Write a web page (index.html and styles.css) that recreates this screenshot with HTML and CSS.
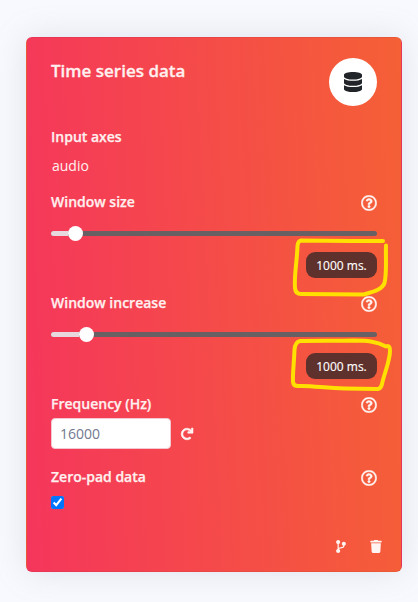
FILE: index.html
```html
<!DOCTYPE html>
<html lang="en">
<head>
<meta charset="utf-8">
<title>Time series data</title>
<link rel="stylesheet" href="styles.css">
</head>
<body>
<svg class="defs" width="0" height="0" aria-hidden="true">
  <symbol id="help" viewBox="0 0 512 512"><path d="M256 8C119.043 8 8 119.083 8 256c0 136.997 111.043 248 248 248s248-111.003 248-248C504 119.083 392.957 8 256 8zm0 448c-110.532 0-200-89.431-200-200 0-110.495 89.472-200 200-200 110.491 0 200 89.471 200 200 0 110.53-89.431 200-200 200zm107.244-255.2c0 67.052-72.421 68.084-72.421 92.863V300c0 6.627-5.373 12-12 12h-45.647c-6.627 0-12-5.373-12-12v-8.659c0-35.745 27.1-50.034 47.579-61.516 17.561-9.845 28.324-16.541 28.324-29.579 0-17.246-21.999-28.693-39.784-28.693-23.189 0-33.894 10.977-48.942 29.969-4.057 5.12-11.46 6.071-16.666 2.124l-27.824-21.098c-5.107-3.872-6.251-11.066-2.644-16.363C184.846 131.491 214.94 112 261.794 112c49.071 0 101.45 38.304 101.45 88.8zM298 368c0 23.159-18.841 42-42 42s-42-18.841-42-42 18.841-42 42-42 42 18.841 42 42z"/></symbol>
</svg>
<main class="card">
  <header class="card-header">
    <h1 class="title">Time series data</h1>
    <span class="badge-icon"><svg width="18" height="20" viewBox="0 0 448 512" preserveAspectRatio="none"><path d="M448 73.143v45.714C448 159.143 347.667 192 224 192S0 159.143 0 118.857V73.143C0 32.857 100.333 0 224 0s224 32.857 224 73.143zM448 176v102.857C448 319.143 347.667 352 224 352S0 319.143 0 278.857V176c48.125 33.143 136.208 48.572 224 48.572S399.874 209.143 448 176zm0 160v102.857C448 479.143 347.667 512 224 512S0 479.143 0 438.857V336c48.125 33.143 136.208 48.572 224 48.572S399.874 369.143 448 336z"/></svg></span>
  </header>

  <section class="field field-axes">
    <div class="label-row"><span class="label">Input axes</span></div>
    <div class="axes">audio</div>
  </section>

  <section class="field field-slider">
    <div class="label-row"><span class="label">Window size</span><svg class="help"><use href="#help"/></svg></div>
    <div class="slider slider-size"><span class="fill"></span><span class="thumb"></span></div>
    <div class="value">1000 ms.</div>
  </section>

  <section class="field field-slider">
    <div class="label-row"><span class="label">Window increase</span><svg class="help"><use href="#help"/></svg></div>
    <div class="slider slider-increase"><span class="fill"></span><span class="thumb"></span></div>
    <div class="value">1000 ms.</div>
  </section>

  <section class="field field-frequency">
    <div class="label-row"><span class="label">Frequency (Hz)</span><svg class="help"><use href="#help"/></svg></div>
    <div class="input-row">
      <input class="input" type="text" value="16000" aria-label="Frequency">
      <svg class="redo" width="12" height="12" viewBox="0 0 512 512"><path d="M500.33 0h-47.41a12 12 0 0 0-12 12.57l4 82.76A247.42 247.42 0 0 0 256 8C119.34 8 7.9 119.53 8 256.19 8.1 393.07 119.1 504 256 504a247.1 247.1 0 0 0 166.18-63.91 12 12 0 0 0 .48-17.43l-34-34a12 12 0 0 0-16.38-.55A176 176 0 1 1 402.1 157.8l-101.53-4.87a12 12 0 0 0-12.57 12v47.41a12 12 0 0 0 12 12h200.33a12 12 0 0 0 12-12V12a12 12 0 0 0-12-12z"/></svg>
    </div>
  </section>

  <section class="field field-pad">
    <div class="label-row"><span class="label">Zero-pad data</span><svg class="help"><use href="#help"/></svg></div>
    <input class="checkbox" type="checkbox" checked aria-label="Zero-pad data">
  </section>

  <footer class="actions">
    <svg width="10" height="13" viewBox="0 0 384 512"><path d="M384 144c0-44.2-35.8-80-80-80s-80 35.8-80 80c0 36.4 24.3 67.1 57.5 76.8-.6 16.1-4.2 28.5-11 36.9-15.4 19.2-49.3 22.4-85.2 25.7-28.2 2.6-57.4 5.4-81.3 16.9v-144c32.5-10.2 56-40.5 56-76.3 0-44.2-35.8-80-80-80S0 35.8 0 80c0 35.8 23.5 66.1 56 76.3v199.3C23.5 365.9 0 396.2 0 432c0 44.2 35.8 80 80 80s80-35.8 80-80c0-34-21.2-63.1-51.2-74.6 3.1-5.2 7.8-9.8 14.9-13.4 16.2-8.2 40.4-10.4 66.1-12.8 42.2-3.9 90-8.4 118.2-43.4 14-17.4 21.1-39.8 21.6-67.9 31.6-10.8 54.4-40.7 54.4-75.9z"/></svg>
    <svg width="12" height="13" viewBox="0 0 448 512"><path d="M432 32H312l-9.4-18.7A24 24 0 0 0 281.1 0H166.8a23.72 23.72 0 0 0-21.4 13.3L136 32H16A16 16 0 0 0 0 48v32a16 16 0 0 0 16 16h416a16 16 0 0 0 16-16V48a16 16 0 0 0-16-16zM53.2 467a48 48 0 0 0 47.9 45h245.8a48 48 0 0 0 47.9-45L416 128H32z"/></svg>
  </footer>
</main>
<svg class="marker" viewBox="0 0 418 602" aria-hidden="true">
  <path d="M383 241 L350 241 L301 240.500 Q298 241 297.500 246 C297 262 294 275 295 288 Q295.500 294 301 294 L364 294.500 C372 292 382 290 384.500 283 C387 273 385.500 260 386 245.500"/>
  <path d="M386 346.500 C376 341 366 340.500 354 340.500 C335 341 315 340.500 300 341 Q295 342 294.500 350 C294 363 292.500 374 293 382 Q293.500 386.500 299 386 C315 385.500 325 388.500 345 388.500 L378 389 Q381 388.500 382 384 C384 374 390 361 390 351 Q390 346 387.500 346"/>
</svg>
</body>
</html>
```
FILE: styles.css
```css
* { box-sizing: border-box; }

body {
  margin: 0;
  width: 418px;
  height: 602px;
  padding: 37px 16px 30px 26px;
  overflow: hidden;
  background: #f8f9fe;
  font-family: "Open Sans", "Noto Sans", sans-serif;
  font-size: 14px;
  color: #fff0ef;
}

svg { display: block; fill: #fff4f2; }
.defs { position: absolute; }

.card {
  height: 535px;
  padding: 20px 24px 0;
  border: 1px solid rgba(0, 0, 0, .05);
  border-radius: 6px;
  background: linear-gradient(87deg, #f5365c 0%, #f56036 100%);
  box-shadow: 0 0 32px rgba(136, 152, 170, .22);
}

.card-header {
  display: flex;
  justify-content: space-between;
  height: 69px;
}

.title {
  margin: 0;
  font-size: 17px;
  font-weight: 600;
  line-height: 26px;
  -webkit-text-stroke: .3px currentColor;
}

.badge-icon {
  display: flex;
  align-items: center;
  justify-content: center;
  width: 48px;
  height: 48px;
  border-radius: 50%;
  background: #fff;
}
.badge-icon svg { fill: #212529; }

.label-row {
  display: flex;
  align-items: center;
  justify-content: space-between;
  height: 20px;
}
.label {
  font-weight: 600;
  line-height: 20px;
  -webkit-text-stroke: .25px currentColor;
}
.help {
  width: 16px;
  height: 16px;
  margin-top: 2px;
  overflow: visible;
  stroke: #fff4f2;
  stroke-width: 12px;
}

.field-axes { height: 65px; }
.axes { padding: 9px 0 0 1px; line-height: 20px; }

.field-slider { height: 101px; }

.slider {
  display: flex;
  align-items: center;
  height: 5px;
  margin-top: 19px;
  border-radius: 3px;
  background: #696063;
}
.fill { height: 5px; border-radius: 3px 0 0 3px; background: #e8d9df; }
.slider-size .fill { width: 17px; }
.slider-increase .fill { width: 28px; }
.thumb {
  flex: none;
  width: 15px;
  height: 15px;
  border-radius: 50%;
  background: #fff;
}

.value {
  width: 71px;
  height: 26px;
  margin: 16px 0 0 auto;
  padding-top: 1px;
  border-radius: 9px;
  background: #5f312d;
  color: #fff;
  font-size: 12px;
  line-height: 26px;
  text-align: center;
  -webkit-text-stroke: .15px currentColor;
}

.field-frequency { height: 73px; }
.input-row {
  display: flex;
  align-items: center;
  gap: 10px;
  margin-top: 4px;
}
.input {
  width: 120px;
  height: 31px;
  padding: 0 8px;
  border: 1px solid #f3c8d2;
  border-radius: 4px;
  background: #fff;
  color: #727891;
  font: 14px "Open Sans", sans-serif;
}
.redo {
  overflow: visible;
  stroke: #fff4f2;
  stroke-width: 24px;
}

.field-pad { height: 73px; }
.checkbox {
  display: block;
  width: 13px;
  height: 13px;
  margin: 9px 0 0;
  accent-color: #0075ff;
}

.actions {
  display: flex;
  justify-content: flex-end;
  gap: 24px;
  margin-right: -5px;
}

.marker {
  position: absolute;
  top: 0;
  left: 0;
  width: 418px;
  height: 602px;
  pointer-events: none;
}
.marker path {
  fill: none;
  stroke: #ffe000;
  stroke-width: 4;
  stroke-linecap: round;
  stroke-linejoin: round;
}
```
